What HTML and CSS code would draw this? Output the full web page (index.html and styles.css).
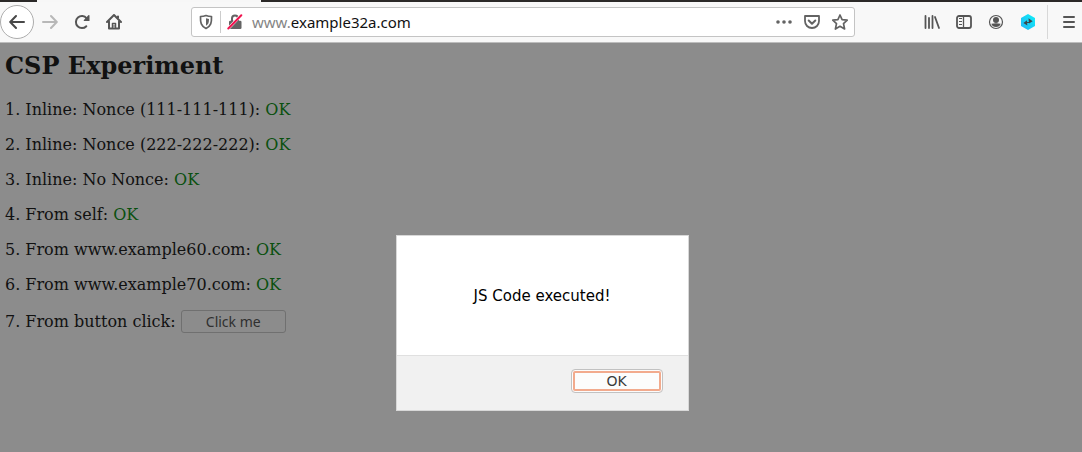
FILE: index.html
```html
<!DOCTYPE html>
<html lang="en">
<head>
<meta charset="utf-8">
<title>CSP Experiment</title>
<link rel="stylesheet" href="styles.css">
</head>
<body>
<div class="browser">
  <div class="tabstrip"><span class="active-tab"></span></div>
  <header class="toolbar">
    <nav class="nav" aria-label="Navigation">
      <button class="icon-btn back" aria-label="Back">
        <svg width="16" height="16" viewBox="0 0 16 16" fill="none" stroke="currentColor" stroke-width="2" stroke-linecap="round" stroke-linejoin="round"><path d="M15 8H1.500M7 2L1.200 8L7 14"/></svg>
      </button>
      <button class="icon-btn forward" aria-label="Forward" disabled>
        <svg width="16" height="16" viewBox="0 0 16 16" fill="none" stroke="currentColor" stroke-width="2" stroke-linecap="round" stroke-linejoin="round"><path d="M1 8H14.500M9 2L14.800 8L9 14"/></svg>
      </button>
      <button class="icon-btn" aria-label="Reload">
        <svg width="16" height="16" viewBox="0 0 16 16"><path d="M12.300 12.200A6 6 0 1 1 12.600 4.300" fill="none" stroke="currentColor" stroke-width="2" stroke-linecap="round"/><path d="M14.300 1.200Q15.500.700 15.500 1.800V7H10.200Q9.200 7 9.900 6.100z" fill="currentColor"/></svg>
      </button>
      <button class="icon-btn" aria-label="Home">
        <svg width="16" height="16" viewBox="0 0 16 16" fill="none" stroke="currentColor" stroke-width="2" stroke-linecap="round" stroke-linejoin="round"><path d="M1 8L8 1L15 8M3 7.500V14.500H13V7.500M12 2.500V4"/><path d="M6.500 14V9.500H9.500V14" stroke-width="1.500"/><path d="M8 11.500V12.500" stroke-width="1"/></svg>
      </button>
    </nav>
    <div class="urlbar">
      <button class="icon-btn" aria-label="Tracking protection">
        <svg width="16" height="16" viewBox="0 0 16 16"><path d="M8 1.500C10 2.300 12 2.500 13.500 2.500C13.700 8.500 13 12 8 14.500C3 12 2.300 8.500 2.500 2.500C4 2.500 6 2.300 8 1.500z" fill="none" stroke="currentColor" stroke-width="1.700" stroke-linejoin="round"/><path d="M8 4.200L11 5C11 8.500 10.500 10.300 8 11.700z" fill="currentColor"/></svg>
      </button>
      <span class="divider"></span>
      <button class="icon-btn" aria-label="Connection not secure">
        <svg width="16" height="16" viewBox="0 0 16 16"><path d="M5 7.500V4.500A3 3 0 0 1 11 4.500V7.500" fill="none" stroke="currentColor" stroke-width="2"/><rect x="2" y="6.800" width="12.500" height="8.200" rx="1.300" fill="currentColor"/><path d="M1.300 14.500L14 1.300" stroke="#fff" stroke-width="3"/><path d="M1.300 14.500L14.300 1.300" stroke="#f0144f" stroke-width="2" stroke-linecap="round"/></svg>
      </button>
      <span class="address">www.<span class="domain">example32a.com</span></span>
      <button class="icon-btn" aria-label="Page actions">
        <svg width="16" height="16" viewBox="0 0 16 16" fill="currentColor"><circle cx="2" cy="8" r="1.800"/><circle cx="8" cy="8" r="1.800"/><circle cx="14" cy="8" r="1.800"/></svg>
      </button>
      <button class="icon-btn" aria-label="Save to Pocket">
        <svg width="16" height="16" viewBox="0 0 16 16" fill="none" stroke="currentColor" stroke-linecap="round" stroke-linejoin="round"><path d="M1 2H15V7C15 11 12 14 8 14S1 11 1 7z" stroke-width="1.800"/><path d="M4.700 6.500L8 9.700L11.300 6.500" stroke-width="2"/></svg>
      </button>
      <button class="icon-btn" aria-label="Bookmark this page">
        <svg width="16" height="16" viewBox="0 0 16 16" fill="none" stroke="currentColor" stroke-width="1.700" stroke-linejoin="round"><path d="M8 1L10.100 5.600L15.200 6.200L11.500 9.700L12.600 15L8 12.300L3.400 15L4.500 9.700L.800 6.200L5.900 5.600z"/></svg>
      </button>
    </div>
    <div class="tools">
      <button class="icon-btn" aria-label="Library">
        <svg width="16" height="16" viewBox="0 0 16 16" fill="none" stroke="currentColor" stroke-width="1.800" stroke-linecap="round"><path d="M1.500 2V14M5 4V14M8.500 2V14M11 3L15 14"/></svg>
      </button>
      <button class="icon-btn" aria-label="Sidebars">
        <svg width="16" height="16" viewBox="0 0 16 16" fill="none" stroke="currentColor"><rect x="1" y="2" width="14" height="12" rx="2" stroke-width="1.800"/><path d="M7.500 2V14" stroke-width="1.300"/><path d="M3 4.500H6M3 7.500H6M3 10.500H6" stroke-width="1"/></svg>
      </button>
      <button class="icon-btn" aria-label="Account">
        <svg width="16" height="16" viewBox="0 0 16 16"><circle cx="8" cy="8" r="6.500" fill="none" stroke="currentColor" stroke-width="1.200"/><circle cx="8" cy="6" r="3" fill="currentColor"/><path d="M3.300 9.700Q5.500 9.300 8 9.300T12.700 9.700Q11.500 13 8 13T3.300 9.700z" fill="currentColor"/></svg>
      </button>
      <button class="icon-btn" aria-label="Extension">
        <svg width="16" height="16" viewBox="0 0 16 16"><defs><linearGradient id="hex" x1="1" y1="0" x2="0" y2="1"><stop offset="0" stop-color="#10f0f8"/><stop offset="1" stop-color="#20b4f4"/></linearGradient></defs><path d="M8 0L15 4V12L8 16L1 12V4z" fill="url(#hex)"/><path d="M8.500 4.300L12.700 7.300L9 9.500zM7.300 11.500L3.400 9L7 6.300zM6 8H10V9H6z" fill="#38474d"/></svg>
      </button>
      <span class="separator"></span>
      <button class="icon-btn menu" aria-label="Menu">
        <svg width="16" height="16" viewBox="0 0 16 16" fill="none" stroke="currentColor" stroke-width="2" stroke-linecap="round"><path d="M3 3H13M3 8H13M3 13H13"/></svg>
      </button>
    </div>
  </header>
  <main class="page">
    <h1>CSP Experiment</h1>
    <p>1. Inline: Nonce (111-111-111): <span class="ok">OK</span></p>
    <p>2. Inline: Nonce (222-222-222): <span class="ok">OK</span></p>
    <p>3. Inline: No Nonce: <span class="ok">OK</span></p>
    <p>4. From self: <span class="ok">OK</span></p>
    <p>5. From www.example60.com: <span class="ok">OK</span></p>
    <p>6. From www.example70.com: <span class="ok">OK</span></p>
    <p>7. From button click: <button class="click-me">Click me</button></p>
    <div class="overlay">
      <div class="dialog" role="alertdialog" aria-describedby="message">
        <p class="message" id="message">JS Code executed!</p>
        <div class="actions"><button class="confirm">OK</button></div>
      </div>
    </div>
  </main>
</div>
</body>
</html>
```
FILE: styles.css
```css
* {
  box-sizing: border-box;
}

body {
  margin: 0;
}

.browser {
  display: flex;
  flex-direction: column;
  min-height: 100vh;
}

.tabstrip {
  display: flex;
  height: 2px;
  padding-left: 37px;
  background: #2b2928;
}

.active-tab {
  width: 224px;
  background: #f7f7f7;
}

.toolbar {
  display: flex;
  align-items: center;
  height: 41px;
  background: #f8f8f8;
  border-bottom: 1px solid #bdbdbd;
}

.nav {
  display: flex;
  align-items: center;
}

.icon-btn {
  display: flex;
  flex: none;
  align-items: center;
  justify-content: center;
  width: 32px;
  height: 32px;
  padding: 0;
  border: 0;
  background: none;
  color: #555;
}

.back {
  width: 34px;
  height: 34px;
  border: 1px solid #adadad;
  border-radius: 50%;
  background: #fff;
  color: #484848;
}

.forward {
  color: #b8b8b8;
}

.menu {
  width: 26px;
}

.urlbar {
  display: flex;
  flex: 1;
  align-items: center;
  height: 30px;
  margin: 0 61px;
  border: 1px solid #c4c4c4;
  border-radius: 3px;
  background: #fff;
}

.urlbar .icon-btn {
  width: 28px;
  height: 28px;
  color: #636363;
}

.divider {
  width: 1px;
  height: 22px;
  background: #ccc;
}

.address {
  flex: 1;
  padding-left: 3px;
  color: #858585;
  font: 15px/20px "Noto Sans", sans-serif;
}

.domain {
  color: #111;
}

.tools {
  display: flex;
  align-items: center;
}

.separator {
  width: 1px;
  height: 34px;
  margin: 0 8px 0 3px;
  background: #d8d8d8;
}

.page {
  position: relative;
  flex: 1;
  padding: 8px 5px;
  background: #8c8c8c;
  color: #111;
  font: 16px/19px "DejaVu Serif", serif;
}

h1 {
  margin: 0 0 20px;
  font-size: 24px;
  line-height: 29px;
}

p {
  margin: 0 0 16px;
}

.ok {
  color: #0a500f;
}

.click-me {
  width: 105px;
  height: 23px;
  padding: 0;
  border: 1px solid #707070;
  border-radius: 3px;
  background: #8c8c8c;
  color: #303030;
  font: 14px/18px "Noto Sans", sans-serif;
}

.overlay {
  position: absolute;
  inset: 0;
  display: flex;
  align-items: flex-start;
  justify-content: center;
  padding: 192px 0 0 2px;
}

.dialog {
  width: 293px;
  border: 1px solid #d8d8d8;
  background: #fff;
}

.message {
  margin: 0;
  padding: 51px 16px 49px;
  color: #000;
  font: 15px/19px "DejaVu Sans", sans-serif;
  text-align: center;
}

.actions {
  display: flex;
  justify-content: flex-end;
  padding: 13px 25px 17px;
  border-top: 1px solid #e0e0e0;
  background: #f1f1f1;
}

.confirm {
  width: 92px;
  height: 24px;
  padding: 0;
  border: 1px solid #c2c2c2;
  border-radius: 4px;
  background: #fcfcfc;
  box-shadow: inset 0 0 0 1px #fcfcfc, inset 0 0 0 3px #f2aa8d;
  color: #3c3c3c;
  font: 14px/20px "DejaVu Sans", sans-serif;
}
```
